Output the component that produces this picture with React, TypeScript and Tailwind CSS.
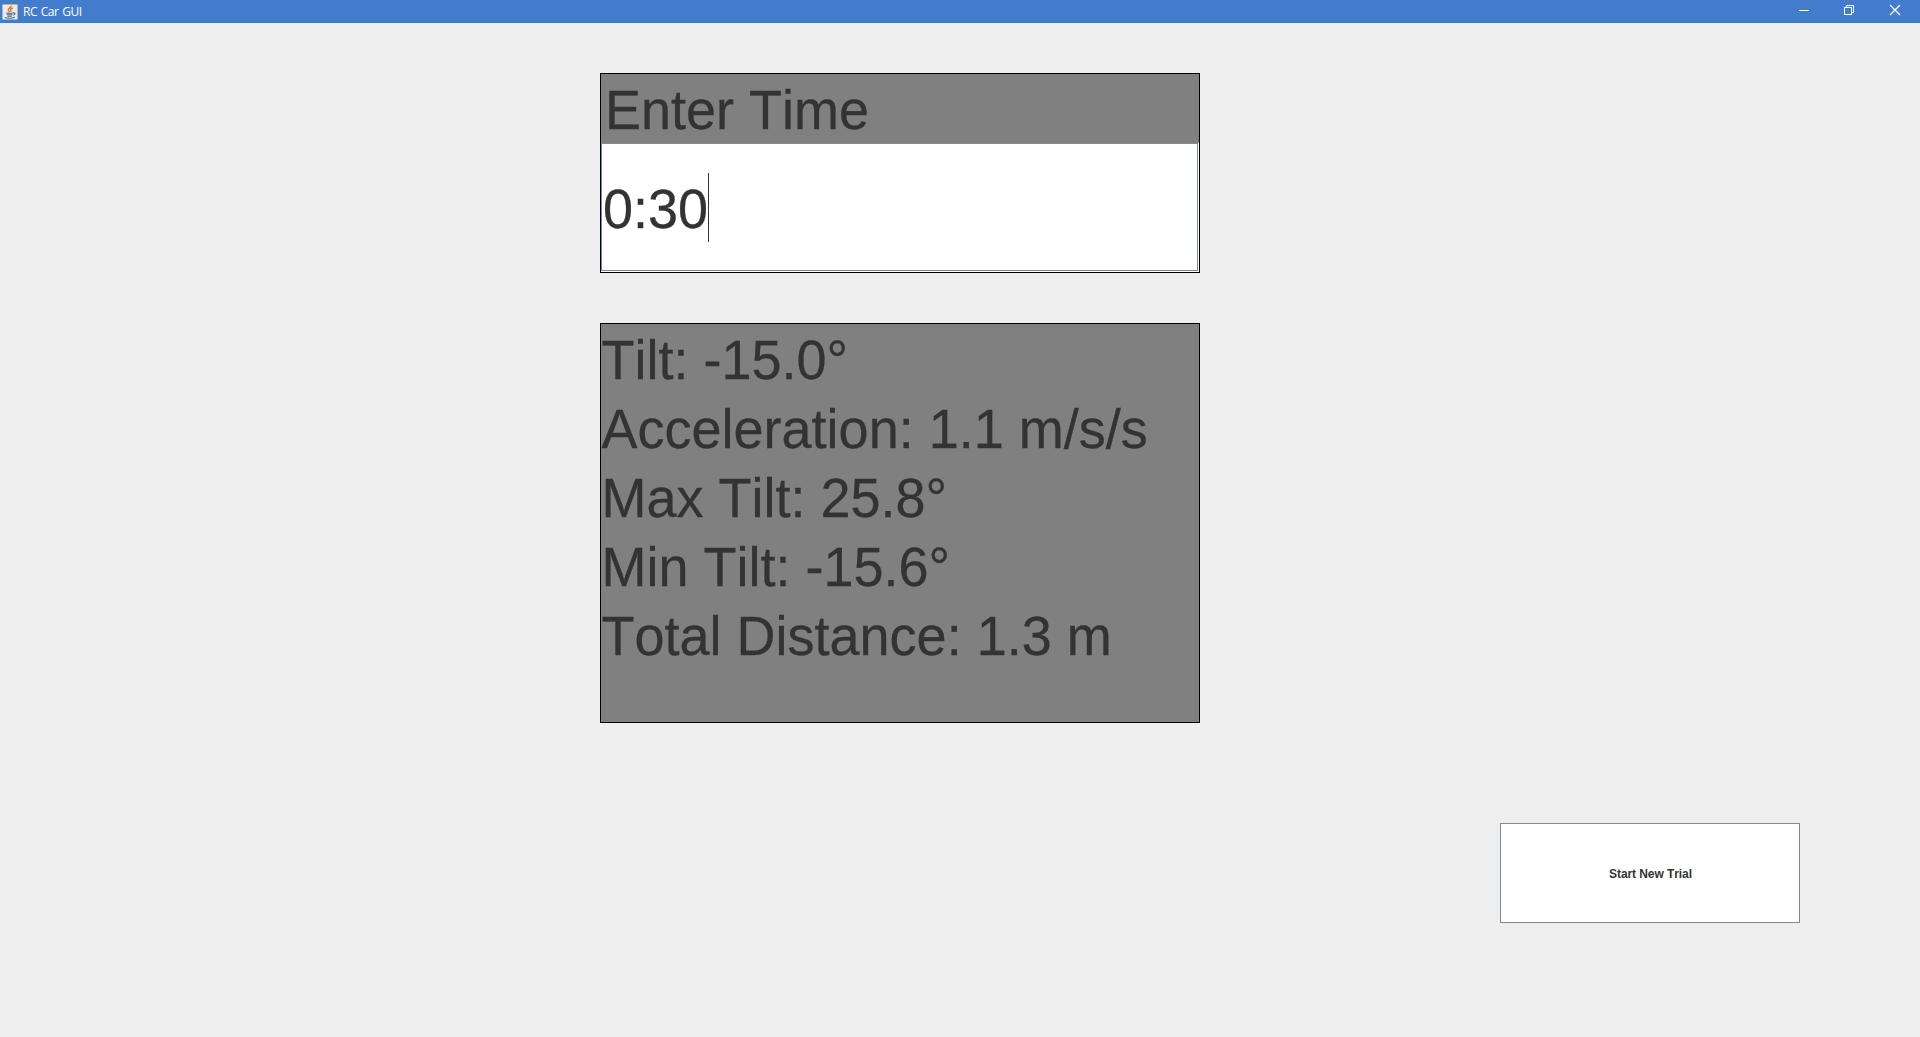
import React from "react";

const readings = [
  "Tilt: -15.0°",
  "Acceleration: 1.1 m/s/s",
  "Max Tilt: 25.8°",
  "Min Tilt: -15.6°",
  "Total Distance: 1.3 m",
];

function JavaIcon() {
  return (
    <svg width="16" height="16" viewBox="0 0 16 16">
      <rect x="0.5" y="0.5" width="15" height="15" rx="1" fill="#e9ebec" stroke="#b4b4b0" />
      <path d="M9.2 1.6C9.8 3.4 5.4 4.4 6.2 6.4c.3.7 1 1.1 1.2 1.8M10.8 4C8.6 4.9 8 5.6 8.8 6.6c.4.6.2 1-.2 1.5" fill="none" stroke="#e8742a" strokeWidth="1.4" />
      <path d="M4.2 9.2h6.6M4.8 10.8h5.6M5.4 12.2h4.4M2.8 13.6c2.6 1 7.6.9 10-.3M11 9c2.6-.6 2.6 1.6.3 2.2" fill="none" stroke="#41698c" strokeWidth="1.1" />
    </svg>
  );
}

function TitleBar() {
  return (
    <header className="flex h-[23px] items-center bg-[#447ccd] text-white">
      <div className="flex flex-1 items-center gap-[5px] pl-[2px]">
        <JavaIcon />
        <span className="font-['Open_Sans','Noto_Sans',sans-serif] text-[12px] leading-[22px] tracking-[-0.45px] [word-spacing:1px]">RC Car GUI</span>
      </div>
      <div className="flex h-full pr-px">
        <button className="flex w-[46px] justify-center pt-[4px]" aria-label="Minimize">
          <svg width="12" height="12" viewBox="0 0 12 12" shapeRendering="crispEdges"><path d="M1 6.5h10" stroke="white" /></svg>
        </button>
        <button className="flex w-[44px] justify-center pt-[4px]" aria-label="Restore">
          <svg width="12" height="12" viewBox="0 0 12 12" fill="none" stroke="white" shapeRendering="crispEdges"><path d="M1.5 3.5h7v7h-7zM3.5 3.5v-2h7v7h-2" /></svg>
        </button>
        <button className="flex w-[48px] justify-center pt-[4px]" aria-label="Close">
          <svg width="12" height="12" viewBox="0 0 12 12" stroke="white" strokeWidth="1.2"><path d="M1 1l10 10M11 1L1 11" /></svg>
        </button>
      </div>
    </header>
  );
}

function LargeText({ children }: { children: string }) {
  return (
    <span className="block origin-[0_53px] scale-y-[1.04] whitespace-pre [-webkit-text-stroke:0.3px_#333333]">
      {children}
    </span>
  );
}

export default function App() {
  return (
    <div className="flex h-[1037px] w-[1920px] flex-col overflow-hidden bg-[#eeeeee] font-['Liberation_Sans',Arial,sans-serif] text-[#333333]">
      <TitleBar />
      <main className="flex flex-col pt-[50px] pl-[600px] text-[54px] leading-[69px] [font-kerning:none]">
        <section className="flex h-[200px] w-[600px] flex-col border border-black bg-[#808080]">
          <label className="h-[69px] pt-[2px] pl-[4px]">
            <LargeText>Enter Time</LargeText>
          </label>
          <div className="flex-1 bg-white pr-px pb-px">
            <div className="flex h-full items-center border border-[#7a8a99] pl-px">
              <div className="pt-[4px]">
                <LargeText>0:30</LargeText>
              </div>
              <span className="h-[69px] w-px bg-[#333333]" />
            </div>
          </div>
        </section>
        <section className="mt-[50px] h-[400px] w-[600px] border border-black bg-[#808080] pt-[2px] pl-[0.5px]">
          {readings.map((line) => (
            <LargeText key={line}>{line}</LargeText>
          ))}
        </section>
        <button className="mt-[100px] ml-[900px] flex h-[100px] w-[300px] items-center justify-center border border-[#7a8a99] bg-white pt-[2px] pl-px text-[12px] leading-[16px] font-bold">
          <span className="tracking-[-0.08px]">Start New Trial</span>
        </button>
      </main>
    </div>
  );
}
